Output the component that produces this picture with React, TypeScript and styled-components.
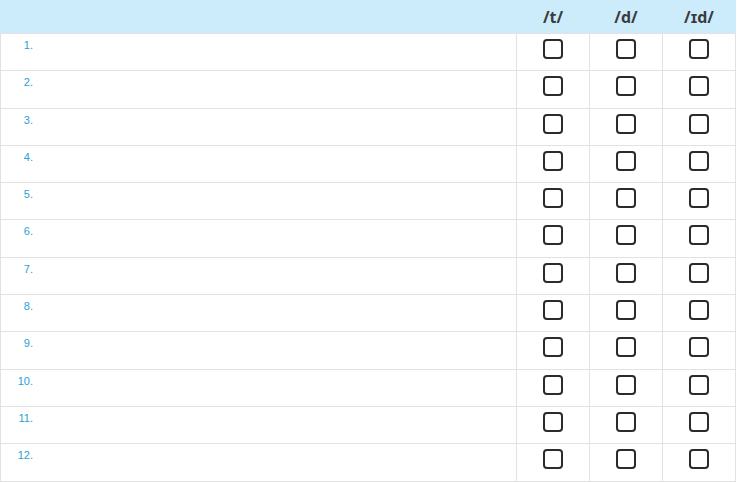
import React from "react";
import styled, { createGlobalStyle } from "styled-components";

const Global = createGlobalStyle`
  html, body { margin: 0; padding: 0; background: #fff; }
  body { font-family: "Open Sans", "Liberation Sans", sans-serif; }
`;

const Table = styled.table`
  border-collapse: collapse;
  width: 735px;
  table-layout: fixed;
`;

const Col = styled.col<{ $w: number }>`
  width: ${(p) => p.$w}px;
`;

const HeadCell = styled.th`
  height: 32px;
  padding: 0;
  background: #ccecfc;
  border: 1px solid #ccecfc;
  border-bottom: 1px solid #e2e2e2;
  color: #3b3b3b;
  font-size: 16px;
  font-weight: 700;
  text-align: center;
  vertical-align: middle;
`;

const Row = styled.tr`
  height: 37.3px;
`;

const NumCell = styled.td`
  border: 1px solid #e2e2e2;
  padding: 0;
  vertical-align: top;
`;

const Num = styled.span`
  display: block;
  width: 32px;
  text-align: right;
  margin-top: 5px;
  line-height: 12px;
  font-family: "Liberation Sans", Arial, sans-serif;
  font-size: 11px;
  color: #2a9fd6;
`;

const BoxCell = styled.td`
  border: 1px solid #e2e2e2;
  padding: 0;
  text-align: center;
  vertical-align: top;
`;

const Box = styled.span`
  display: inline-block;
  box-sizing: border-box;
  width: 20px;
  height: 20px;
  margin-top: 5px;
  border: 2px solid #2b2b2b;
  border-radius: 4px;
`;

const cols = ["/t/", "/d/", "/ɪd/"];

export default function App() {
  const rows = Array.from({ length: 12 }, (_, i) => i + 1);
  return (
    <>
      <Global />
      <Table>
        <colgroup>
          <Col $w={516} />
          <Col $w={73} />
          <Col $w={73} />
          <Col $w={73} />
        </colgroup>
        <thead>
          <tr>
            <HeadCell />
            {cols.map((c) => (
              <HeadCell key={c}>{c}</HeadCell>
            ))}
          </tr>
        </thead>
        <tbody>
          {rows.map((n) => (
            <Row key={n}>
              <NumCell>
                <Num>{n}.</Num>
              </NumCell>
              {cols.map((c) => (
                <BoxCell key={c}>
                  <Box />
                </BoxCell>
              ))}
            </Row>
          ))}
        </tbody>
      </Table>
    </>
  );
}
